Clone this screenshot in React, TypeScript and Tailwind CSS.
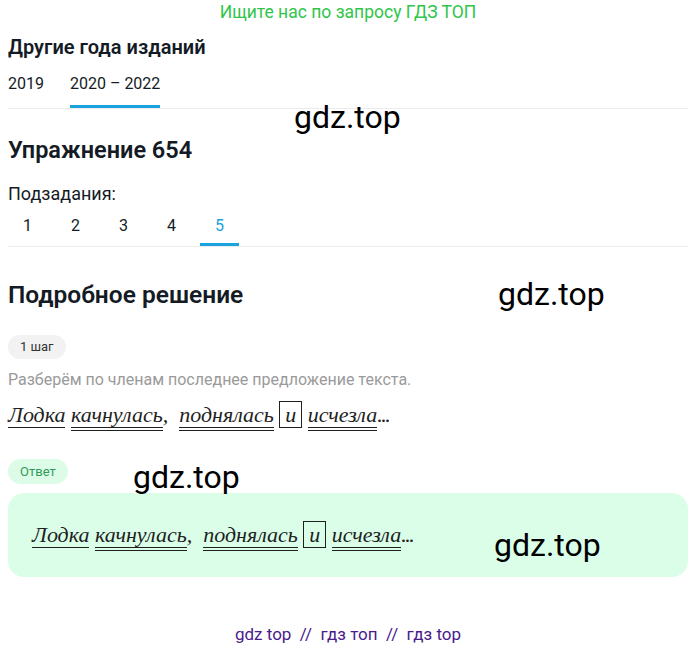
import React from "react";

const YEARS = ["2019", "2020 – 2022"];
const SUBTASKS = ["1", "2", "3", "4", "5"];

function Sentence() {
  return (
    <p className="font-['Liberation_Serif',serif] italic text-[22px] leading-[28px] text-[#1f1f1f]">
      <span className="border-b-[1.5px] border-[#1f1f1f]">Лодка</span>{" "}
      <span className="border-b-4 border-double border-[#1f1f1f]">качнулась</span>,&nbsp;{" "}
      <span className="border-b-4 border-double border-[#1f1f1f]">поднялась</span>{" "}
      <span className="border border-[#1f1f1f] px-[5px]">и</span>{" "}
      <span className="border-b-4 border-double border-[#1f1f1f]">исчезла</span>
      <span className="tracking-[-1.5px]">...</span>
    </p>
  );
}

function Watermark({ className }: { className: string }) {
  return (
    <span className={`absolute font-['Roboto',sans-serif] text-[32px] leading-none text-black ${className}`}>
      gdz.top
    </span>
  );
}

export default function App() {
  return (
    <div className="relative w-[700px] h-[650px] bg-white font-['Roboto',sans-serif] text-[#141b24]">
      <div className="pl-2 pr-3">
        <p className="pt-[1px] text-center text-[17.5px] leading-[22px] text-[#2fc54b]">
          Ищите нас по запросу ГДЗ ТОП
        </p>

        <h2 className="mt-[11px] text-[20px] font-semibold leading-[26px]">Другие года изданий</h2>
        <div className="mt-[13px] flex gap-[26px] border-b border-[#ececec] text-[16px]">
          {YEARS.map((y, i) => (
            <span
              key={y}
              className={
                i === 1
                  ? "border-b-[3px] border-[#1aa3dc] pb-[10px] leading-[22px]"
                  : "border-b-[3px] border-transparent pb-[10px] leading-[22px]"
              }
            >
              {y}
            </span>
          ))}
        </div>

        <h1 className="mt-[26px] text-[23.5px] font-semibold leading-[30px]">Упражнение 654</h1>
        <p className="mt-[18px] text-[18px] leading-[22px]">Подзадания:</p>
        <div className="mt-[10px] flex border-b border-[#ececec] text-[16px]">
          {SUBTASKS.map((s) => (
            <span
              key={s}
              className={
                s === "5"
                  ? "mr-[9px] w-[39px] border-b-[3px] border-[#1aa3dc] pb-[6px] text-center leading-[22px] text-[#1aa3dc]"
                  : "mr-[9px] w-[39px] border-b-[3px] border-transparent pb-[6px] text-center leading-[22px]"
              }
            >
              {s}
            </span>
          ))}
        </div>

        <h2 className="mt-[33px] text-[24.5px] font-semibold leading-[30px]">Подробное решение</h2>

        <div className="mt-[25px] flex">
          <span className="rounded-full bg-[#f2f2f2] px-[12px] py-[4px] text-[13px] leading-[16px] text-[#333]">
            1 шаг
          </span>
        </div>
        <p className="mt-[11px] text-[16px] leading-[20px] text-[#9a9a9a]">
          Разберём по членам последнее предложение текста.
        </p>
        <div className="mt-[11px]">
          <Sentence />
        </div>

        <div className="mt-[30px] flex">
          <span className="rounded-full bg-[#dcfce7] px-[12px] py-[4px] text-[13px] leading-[17px] text-[#2f9a5a]">
            Ответ
          </span>
        </div>
        <div className="mt-[9px] rounded-[16px] bg-[#dafee8] px-[24px] py-[28px]">
          <Sentence />
        </div>

        <p className="mt-[47px] text-center text-[17px] leading-[20px] text-[#4a1b8c]">
          gdz top&nbsp; //&nbsp; гдз топ&nbsp; //&nbsp; гдз top
        </p>
      </div>

      <Watermark className="left-[294px] top-[101px]" />
      <Watermark className="left-[498px] top-[278px]" />
      <Watermark className="left-[133px] top-[461px]" />
      <Watermark className="left-[494px] top-[529px]" />
    </div>
  );
}
